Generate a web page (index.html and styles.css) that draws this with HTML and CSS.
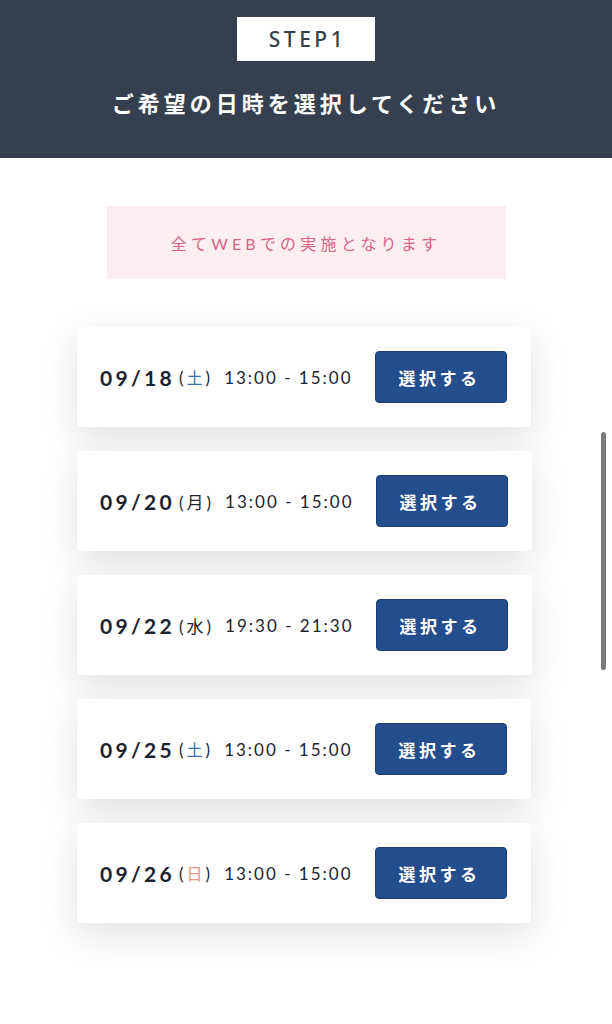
FILE: index.html
```html
<!DOCTYPE html>
<html lang="ja">
<head>
    <meta charset="UTF-8" />
    <title>日時選択</title>
    <link rel="stylesheet" href="styles.css">
</head>
<body>

<header class="step-header">
    <div class="step-label">STEP1</div>
    <h1 class="step-title">ご希望の日時を選択してください</h1>
</header>

<main class="content">
    <p class="notice">全てWEBでの実施となります</p>

    <ul class="slot-list">
        <li class="slot">
            <span class="slot-date">09/18</span>
            <span class="slot-day">(<span class="sat">土</span>)</span>
            <span class="slot-time">13:00 - 15:00</span>
            <button type="button" class="slot-btn">選択する</button>
        </li>
        <li class="slot">
            <span class="slot-date">09/20</span>
            <span class="slot-day">(月)</span>
            <span class="slot-time">13:00 - 15:00</span>
            <button type="button" class="slot-btn">選択する</button>
        </li>
        <li class="slot">
            <span class="slot-date">09/22</span>
            <span class="slot-day">(水)</span>
            <span class="slot-time">19:30 - 21:30</span>
            <button type="button" class="slot-btn">選択する</button>
        </li>
        <li class="slot">
            <span class="slot-date">09/25</span>
            <span class="slot-day">(<span class="sat">土</span>)</span>
            <span class="slot-time">13:00 - 15:00</span>
            <button type="button" class="slot-btn">選択する</button>
        </li>
        <li class="slot">
            <span class="slot-date">09/26</span>
            <span class="slot-day">(<span class="sun">日</span>)</span>
            <span class="slot-time">13:00 - 15:00</span>
            <button type="button" class="slot-btn">選択する</button>
        </li>
    </ul>
</main>

<div class="scroll-indicator"></div>

</body>
</html>
```

FILE: styles.css
```css
body {
    margin: 0;
    background: #fff;
    font-family: Lato, "Noto Sans", "Noto Sans CJK JP", sans-serif;
    color: #1c2230;
}
.step-header {
    background: #353f4d;
    height: 158px;
    padding-top: 17px;
    box-sizing: border-box;
    display: flex;
    flex-direction: column;
    align-items: center;
}
.step-label {
    width: 138px;
    height: 44px;
    background: #fff;
    color: #353f4d;
    font-family: "Noto Sans", sans-serif;
    font-size: 21px;
    font-weight: 500;
    letter-spacing: 3.5px;
    display: flex;
    align-items: center;
    justify-content: center;
    padding-left: 3px;
    box-sizing: border-box;
}
.step-title {
    margin: 25px 0 0;
    color: #fff;
    font-size: 22px;
    font-weight: 700;
    letter-spacing: 4px;
    font-family: "Noto Sans CJK JP", sans-serif;
}
.content {
    padding: 48px 0 80px;
}
.notice {
    width: 399px;
    height: 73px;
    margin: 0 auto 48px;
    background: #fbedf0;
    color: #d9648a;
    font-size: 16px;
    letter-spacing: 4.2px;
    font-family: Lato, "Noto Sans CJK JP", sans-serif;
    display: flex;
    align-items: center;
    justify-content: center;
}
.slot-list {
    list-style: none;
    margin: 0;
    padding: 0 0 0 77px;
    display: flex;
    flex-direction: column;
    align-items: flex-start;
    gap: 24px;
}
.slot {
    height: 100px;
    padding: 0 24px 0 23px;
    background: #fff;
    box-shadow: 0 12px 36px rgba(0, 0, 0, 0.12);
    display: flex;
    align-items: center;
}
.slot-date {
    font-size: 21px;
    font-weight: 700;
    letter-spacing: 3.3px;
}
.slot-day {
    font-size: 17px;
    margin-left: 4px;
    letter-spacing: 3px;
}
.slot-day span {
    font-family: "Noto Sans CJK JP", sans-serif;
    font-size: 16px;
}
.sat {
    color: #3e6fb3;
}
.sun {
    color: #e39680;
}
.slot-time {
    font-size: 17px;
    letter-spacing: 2px;
    margin-left: 11px;
}
.slot-btn {
    width: 132px;
    height: 52px;
    margin-left: 22px;
    border: 1px solid #1c3f75;
    border-radius: 4px;
    background: #234d8c;
    color: #fff;
    font-family: "Noto Sans CJK JP", sans-serif;
    font-size: 17px;
    font-weight: 700;
    letter-spacing: 3.5px;
    padding-left: 4px;
}
.scroll-indicator {
    position: fixed;
    right: 6px;
    top: 432px;
    width: 5px;
    height: 238px;
    border-radius: 3px;
    background: #7a7a7a;
}
```
